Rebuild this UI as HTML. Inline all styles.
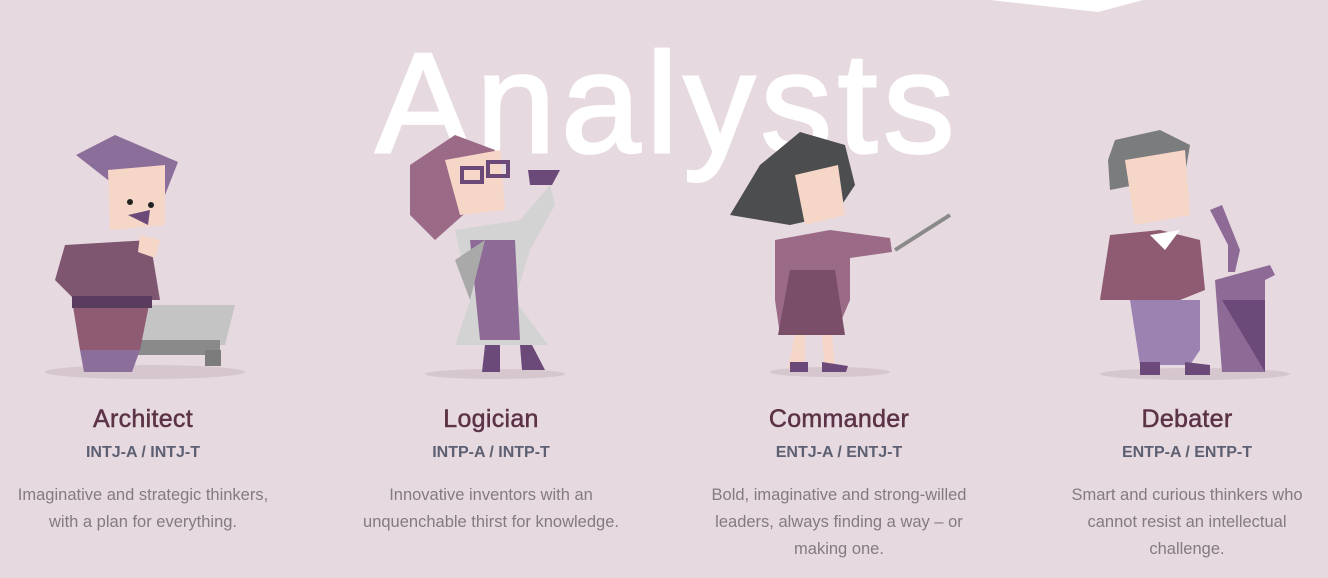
<!DOCTYPE html>
<html><head><meta charset="utf-8"><style>
html,body{margin:0;padding:0;width:1328px;height:578px;overflow:hidden;background:#e7d9e0;font-family:"Liberation Sans",sans-serif}
.big{position:absolute;left:0;width:1328px;top:24px;text-align:center;font-size:142px;color:#fff;letter-spacing:6px;line-height:160px;padding-left:8px;box-sizing:border-box;-webkit-text-stroke:3px #fff}
svg.art{position:absolute;left:0;top:0}
.col{position:absolute;width:320px;text-align:center;top:402px}
.t{font-size:25px;color:#5b3246;line-height:34px;letter-spacing:.3px;-webkit-text-stroke:0.5px #5b3246}
.c{font-size:16px;font-weight:bold;color:#5c6072;margin-top:6px;line-height:22px}
.d{font-size:16.5px;color:#827b80;line-height:27px;margin-top:18px}
</style></head><body>
<svg class="art" width="1328" height="578">
<polygon points="990,0 1098,12 1143,0" fill="#fff"/>
</svg>
<div class="big">Analysts</div>
<svg class="art" width="1328" height="578">
<ellipse cx="145" cy="372" rx="100" ry="7" fill="#d6c6ce"/>
<ellipse cx="495" cy="374" rx="70" ry="5" fill="#d6c6ce"/>
<ellipse cx="830" cy="372" rx="60" ry="5" fill="#d6c6ce"/>
<ellipse cx="1195" cy="374" rx="95" ry="6" fill="#d6c6ce"/>
<polygon points="130,305 235,305 225,345 130,345" fill="#c4c4c4"/>
<polygon points="130,340 220,340 220,355 130,355" fill="#8a8a8a"/>
<rect x="205" y="350" width="16" height="16" fill="#7c7c7c"/>
<polygon points="76,155 115,135 178,162 165,195 108,180" fill="#8c6e9a"/>
<polygon points="108,170 165,165 165,225 110,230" fill="#f6d6c6"/>
<polygon points="128,215 150,210 148,225" fill="#6b4a7a"/>
<circle cx="130" cy="202" r="3" fill="#222"/><circle cx="151" cy="205" r="3" fill="#222"/>
<polygon points="65,245 150,240 160,300 75,300 55,280" fill="#7f5670"/>
<polygon points="72,300 150,300 140,350 80,350" fill="#8e5b72"/>
<rect x="72" y="296" width="80" height="12" fill="#5a3d5e"/>
<polygon points="80,350 140,350 132,372 84,372" fill="#8c6e9a"/>
<polygon points="140,235 160,240 155,258 138,252" fill="#f6d6c6"/>
<polygon points="410,165 455,135 495,150 480,200 435,240 410,215" fill="#9a6a86"/>
<polygon points="445,160 500,150 505,210 460,215" fill="#f6d6c6"/>
<rect x="462" y="168" width="20" height="14" fill="none" stroke="#6b4a7a" stroke-width="4"/>
<rect x="488" y="162" width="20" height="14" fill="none" stroke="#6b4a7a" stroke-width="4"/>
<polygon points="455,230 520,220 550,185 555,205 530,250 515,300 548,345 455,345 470,300" fill="#d3d3d3"/>
<polygon points="470,240 515,240 520,340 480,340" fill="#8e6a96"/>
<polygon points="455,260 485,240 470,300" fill="#a9a9a9"/>
<polygon points="528,170 560,170 552,185 530,185" fill="#6b4a7a"/>
<polygon points="485,345 500,345 500,372 482,372" fill="#6b4a7a"/>
<polygon points="520,345 532,345 545,370 522,370" fill="#6b4a7a"/>
<polygon points="730,215 760,165 800,132 845,145 855,185 835,215 790,225" fill="#4b4d4f"/>
<polygon points="795,175 838,165 845,215 805,225" fill="#f6d6c6"/>
<polygon points="775,240 830,230 890,238 892,252 850,258 850,300 835,335 780,335 775,300" fill="#9a6a86"/>
<polygon points="790,270 835,270 845,335 778,335" fill="#7a4e68"/>
<line x1="895" y1="250" x2="950" y2="215" stroke="#8a8a8a" stroke-width="4"/>
<polygon points="795,335 805,335 805,360 792,372 788,368" fill="#f6d6c6"/>
<polygon points="822,335 832,335 835,368 825,372" fill="#f6d6c6"/>
<polygon points="790,362 808,362 808,372 790,372" fill="#6b4a7a"/>
<polygon points="822,362 848,366 846,372 822,372" fill="#6b4a7a"/>
<polygon points="1108,160 1115,140 1160,130 1190,145 1185,175 1110,190" fill="#7a7c7e"/>
<polygon points="1125,160 1185,150 1190,215 1135,225" fill="#f6d6c6"/>
<polygon points="1110,235 1160,230 1200,240 1205,290 1180,300 1140,300 1100,300" fill="#8e5b72"/>
<polygon points="1150,235 1180,230 1165,250" fill="#fff"/>
<polygon points="1130,300 1200,300 1200,350 1190,365 1140,365" fill="#9c82b0"/>
<polygon points="1140,362 1160,362 1160,375 1140,375" fill="#6b4a7a"/>
<polygon points="1185,362 1210,365 1210,375 1185,375" fill="#6b4a7a"/>
<polygon points="1215,280 1270,265 1275,275 1265,280 1265,372 1222,372" fill="#8e6a96"/>
<polygon points="1222,300 1265,300 1265,372" fill="#6b4a7a"/>
<polygon points="1210,210 1222,205 1240,250 1235,272 1228,272 1228,245" fill="#8e6a96"/>
</svg>
<div class="col" style="left:-17px"><div class="t">Architect</div><div class="c">INTJ-A / INTJ-T</div><div class="d">Imaginative and strategic thinkers,<br>with a plan for everything.</div></div>
<div class="col" style="left:331px"><div class="t">Logician</div><div class="c">INTP-A / INTP-T</div><div class="d">Innovative inventors with an<br>unquenchable thirst for knowledge.</div></div>
<div class="col" style="left:679px"><div class="t">Commander</div><div class="c">ENTJ-A / ENTJ-T</div><div class="d">Bold, imaginative and strong-willed<br>leaders, always finding a way – or<br>making one.</div></div>
<div class="col" style="left:1027px"><div class="t">Debater</div><div class="c">ENTP-A / ENTP-T</div><div class="d">Smart and curious thinkers who<br>cannot resist an intellectual<br>challenge.</div></div>
</body></html>
